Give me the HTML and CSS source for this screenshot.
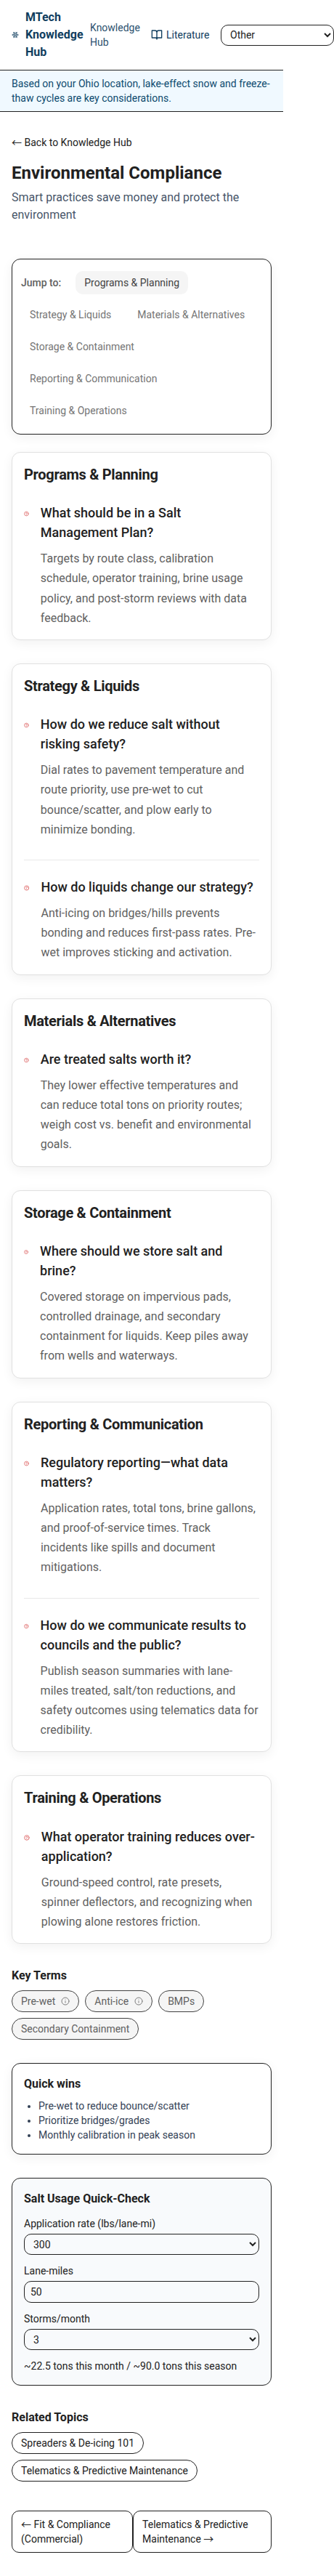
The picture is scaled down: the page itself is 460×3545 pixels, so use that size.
FILE: index.html
```html
<!DOCTYPE html>
<html lang="en">
<head>
<meta charset="utf-8">
<title>Environmental Compliance</title>
<link rel="stylesheet" href="styles.css">
</head>
<body>
<svg class="defs" width="0" height="0">
  <symbol id="help" viewBox="0 0 24 24"><circle cx="12" cy="12" r="10"/><path d="M9.09 9a3 3 0 0 1 5.83 1c0 2-3 3-3 3M12 17h.01"/></symbol>
  <symbol id="info" viewBox="0 0 24 24"><circle cx="12" cy="12" r="10"/><path d="M12 16v-4M12 8h.01"/></symbol>
</svg>
<div class="page">
  <header class="topbar">
    <a class="brand">
      <svg class="snow" viewBox="0 0 24 24"><path d="m10 20-1.25-2.5L6 18M10 4 8.75 6.5 6 6M14 20l1.25-2.5L18 18M14 4l1.25 2.5L18 6M17 21l-3-6h-4M17 3l-3 6 1.5 3M2 12h6.5L10 9M20 10l-1.5 2 1.5 2M22 12h-6.5L14 15M4 10l1.5 2L4 14M7 21l3-6-1.5-3M7 3l3 6h4"/></svg>
      <span>MTech Knowledge Hub</span>
    </a>
    <a class="navlink">Knowledge Hub</a>
    <a class="literature">
      <svg class="book" viewBox="0 0 24 24"><path d="M2 3h6a4 4 0 0 1 4 4v14a3 3 0 0 0-3-3H2zM22 3h-6a4 4 0 0 0-4 4v14a3 3 0 0 1 3-3h7z"/></svg>
      <span>Literature</span>
    </a>
    <select class="field place"><option>Other</option></select>
  </header>
  <div class="banner">Based on your Ohio location, lake-effect snow and freeze-thaw cycles are key considerations.</div>
  <main class="main">
    <a class="back">← Back to Knowledge Hub</a>
    <h1>Environmental Compliance</h1>
    <p class="lead">Smart practices save money and protect the environment</p>

    <nav class="jump">
      <span class="jump-label">Jump to:</span>
      <a class="jump-item active">Programs &amp; Planning</a>
      <a class="jump-item">Strategy &amp; Liquids</a>
      <a class="jump-item">Materials &amp; Alternatives</a>
      <a class="jump-item">Storage &amp; Containment</a>
      <a class="jump-item">Reporting &amp; Communication</a>
      <a class="jump-item">Training &amp; Operations</a>
    </nav>

    <div class="cards">
      <section class="card">
        <h2>Programs &amp; Planning</h2>
        <article class="qa"><svg class="q-icon"><use href="#help"/></svg><div><h3>What should be in a Salt Management Plan?</h3><p>Targets by route class, calibration schedule, operator training, brine usage policy, and post-storm reviews with data feedback.</p></div></article>
      </section>
      <section class="card">
        <h2>Strategy &amp; Liquids</h2>
        <article class="qa"><svg class="q-icon"><use href="#help"/></svg><div><h3>How do we reduce salt without risking safety?</h3><p>Dial rates to pavement temperature and route priority, use pre-wet to cut bounce/scatter, and plow early to minimize bonding.</p></div></article>
        <article class="qa"><svg class="q-icon"><use href="#help"/></svg><div><h3>How do liquids change our strategy?</h3><p>Anti-icing on bridges/hills prevents bonding and reduces first-pass rates. Pre-wet improves sticking and activation.</p></div></article>
      </section>
      <section class="card">
        <h2>Materials &amp; Alternatives</h2>
        <article class="qa"><svg class="q-icon"><use href="#help"/></svg><div><h3>Are treated salts worth it?</h3><p>They lower effective temperatures and can reduce total tons on priority routes; weigh cost vs. benefit and environmental goals.</p></div></article>
      </section>
      <section class="card">
        <h2>Storage &amp; Containment</h2>
        <article class="qa"><svg class="q-icon"><use href="#help"/></svg><div><h3>Where should we store salt and brine?</h3><p>Covered storage on impervious pads, controlled drainage, and secondary containment for liquids. Keep piles away from wells and waterways.</p></div></article>
      </section>
      <section class="card">
        <h2>Reporting &amp; Communication</h2>
        <article class="qa"><svg class="q-icon"><use href="#help"/></svg><div><h3>Regulatory reporting—what data matters?</h3><p>Application rates, total tons, brine gallons, and proof-of-service times. Track incidents like spills and document mitigations.</p></div></article>
        <article class="qa"><svg class="q-icon"><use href="#help"/></svg><div><h3>How do we communicate results to councils and the public?</h3><p>Publish season summaries with lane-miles treated, salt/ton reductions, and safety outcomes using telematics data for credibility.</p></div></article>
      </section>
      <section class="card">
        <h2>Training &amp; Operations</h2>
        <article class="qa"><svg class="q-icon"><use href="#help"/></svg><div><h3>What operator training reduces over-application?</h3><p>Ground-speed control, rate presets, spinner deflectors, and recognizing when plowing alone restores friction.</p></div></article>
      </section>
    </div>

    <section class="group">
      <h4>Key Terms</h4>
      <div class="chips">
        <span class="chip term">Pre-wet <svg class="info"><use href="#info"/></svg></span>
        <span class="chip term">Anti-ice <svg class="info"><use href="#info"/></svg></span>
        <span class="chip term">BMPs</span>
        <span class="chip term">Secondary Containment</span>
      </div>
    </section>

    <section class="panel wins">
      <h4>Quick wins</h4>
      <ul>
        <li>Pre-wet to reduce bounce/scatter</li>
        <li>Prioritize bridges/grades</li>
        <li>Monthly calibration in peak season</li>
      </ul>
    </section>

    <section class="panel calc">
      <h4>Salt Usage Quick-Check</h4>
      <label>Application rate (lbs/lane-mi)<select class="field"><option>300</option></select></label>
      <label>Lane-miles<input class="field" type="text" value="50"></label>
      <label>Storms/month<select class="field"><option>3</option></select></label>
      <p>~22.5 tons this month / ~90.0 tons this season</p>
    </section>

    <section class="group related">
      <h4>Related Topics</h4>
      <div class="chips">
        <a class="chip">Spreaders &amp; De-icing 101</a>
        <a class="chip">Telematics &amp; Predictive Maintenance</a>
      </div>
    </section>

    <nav class="pager">
      <a>← Fit &amp; Compliance (Commercial)</a>
      <a>Telematics &amp; Predictive Maintenance →</a>
    </nav>
  </main>
</div>
</body>
</html>
```

FILE: styles.css
```css
* { box-sizing: border-box; }
body, h1, h2, h3, h4, p, ul { margin: 0; }
body {
  background: #fff;
  color: #212121;
  font: 400 14px/20px Roboto, "Noto Sans CJK SC", sans-serif;
  overflow-x: hidden;
}
.defs { position: absolute; }
svg {
  fill: none;
  stroke: currentColor;
  stroke-width: 2;
  stroke-linecap: round;
  stroke-linejoin: round;
}
.page { width: 390px; }

.topbar {
  display: flex;
  align-items: center;
  height: 97px;
  padding: 0 16px;
  border-bottom: 1px solid #212121;
  color: #0f3d5e;
}
.brand {
  display: flex;
  flex: none;
  align-items: center;
  gap: 9px;
  width: 99px;
  margin-right: 9px;
  font-size: 16px;
  font-weight: 700;
  line-height: 24px;
}
.snow { flex: none; width: 10px; height: 20px; }
.navlink { flex: none; width: 68px; margin-right: 16px; opacity: .9; }
.literature {
  display: flex;
  flex: none;
  align-items: center;
  gap: 5px;
  width: 80px;
  margin-right: 16px;
}
.book { flex: none; width: 16px; height: 16px; }

.field {
  display: block;
  width: 100%;
  height: 29px;
  padding: 4px 8px;
  border: 1px solid #212121;
  border-radius: 10px;
  background: transparent;
  color: #212121;
  font: 400 14px/20px Roboto, sans-serif;
}
input.field { height: 30px; }
.place { flex: none; width: 156px; }

.banner {
  padding: 8px 16px;
  border-bottom: 1px solid #212121;
  background: #f0f9ff;
  color: #0c4a6e;
}

.main { padding: 32px 16px; }
.back { display: block; margin-bottom: 16px; }
h1 { font-size: 24px; font-weight: 700; line-height: 32px; }
.lead { margin-top: 6px; color: #475569; font-size: 16px; line-height: 24px; }

.jump {
  display: flex;
  flex-wrap: wrap;
  align-items: center;
  gap: 12px;
  margin: 48px 0 24px;
  padding: 16px 12px;
  border: 1px solid #212121;
  border-radius: 12px;
  box-shadow: 0 4px 16px rgba(0, 0, 0, .06);
}
.jump-label { margin-right: 8px; color: #616161; font-weight: 500; }
.jump-item {
  padding: 6px 12px;
  border-radius: 10px;
  color: #757575;
}
.jump-item.active { background: #f5f5f5; color: #424242; }

.cards { display: grid; gap: 32px; }
.card {
  padding: 16px;
  border: 1px solid #e0e0e0;
  border-radius: 12px;
  background: #fff;
  box-shadow: 0 4px 16px rgba(0, 0, 0, .06);
}
h2 {
  margin-bottom: 25.2px;
  font-size: 20px;
  font-weight: 700;
  line-height: 28px;
  letter-spacing: -.3px;
}
.qa { display: flex; align-items: flex-start; gap: 16px; }
.qa + .qa { margin-top: 28px; padding-top: 23px; border-top: 1px solid #e8e8e8; }
.q-icon { width: 20px; height: 20px; margin-top: 5px; color: #d32f2f; }
h3 { margin-bottom: 9px; font-size: 18px; font-weight: 500; line-height: 27px; }
.qa p { color: #616161; font-size: 16px; line-height: 27.2px; }

h4 { font-size: 16px; font-weight: 700; line-height: 24px; }
.group { margin-top: 32px; }
.chips { display: flex; flex-wrap: wrap; gap: 8px; margin-top: 8px; }
.chip {
  display: inline-flex;
  align-items: center;
  gap: 8px;
  height: 30px;
  padding: 0 12px;
  border: 1px solid #212121;
  border-radius: 15px;
}
.chip.term { border-color: #424242; background: #f5f5f5; color: #616161; }
.info { width: 12px; height: 12px; opacity: .8; }

.panel { margin-top: 32px; padding: 16px; border: 1px solid #212121; border-radius: 12px; }
.wins { box-shadow: 0 4px 16px rgba(0, 0, 0, .06); }
.wins ul { margin-top: 8px; padding-left: 20px; color: #334155; }
.calc { background: #f8fafc; }
.calc label { display: block; margin-top: 12px; }
.calc .field { margin-top: 4px; }
.calc p { margin-top: 12px; }

.pager { display: flex; justify-content: space-between; margin-top: 40px; }
.pager a { padding: 8px 12px; border: 1px solid #212121; border-radius: 10px; }
```
